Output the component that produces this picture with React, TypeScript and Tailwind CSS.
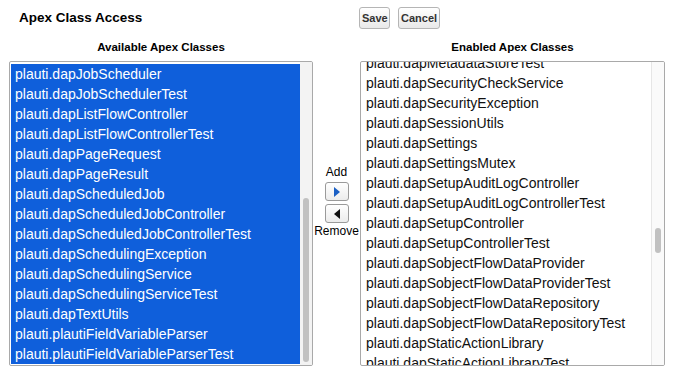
import React from 'react';

const available = [
  'plauti.dapJobScheduler',
  'plauti.dapJobSchedulerTest',
  'plauti.dapListFlowController',
  'plauti.dapListFlowControllerTest',
  'plauti.dapPageRequest',
  'plauti.dapPageResult',
  'plauti.dapScheduledJob',
  'plauti.dapScheduledJobController',
  'plauti.dapScheduledJobControllerTest',
  'plauti.dapSchedulingException',
  'plauti.dapSchedulingService',
  'plauti.dapSchedulingServiceTest',
  'plauti.dapTextUtils',
  'plauti.plautiFieldVariableParser',
  'plauti.plautiFieldVariableParserTest',
];

const enabled = [
  'plauti.dapMetadataStoreTest',
  'plauti.dapSecurityCheckService',
  'plauti.dapSecurityException',
  'plauti.dapSessionUtils',
  'plauti.dapSettings',
  'plauti.dapSettingsMutex',
  'plauti.dapSetupAuditLogController',
  'plauti.dapSetupAuditLogControllerTest',
  'plauti.dapSetupController',
  'plauti.dapSetupControllerTest',
  'plauti.dapSobjectFlowDataProvider',
  'plauti.dapSobjectFlowDataProviderTest',
  'plauti.dapSobjectFlowDataRepository',
  'plauti.dapSobjectFlowDataRepositoryTest',
  'plauti.dapStaticActionLibrary',
  'plauti.dapStaticActionLibraryTest',
];

const btn =
  'h-[22px] px-[2px] rounded-[3px] border border-[#b5b5b5] bg-gradient-to-b from-[#ffffff] to-[#e9e9e9] text-[11px] font-bold text-[#333]';

export default function App() {
  return (
    <div
      className="w-[678px] h-[379px] bg-white text-black overflow-hidden"
      style={{ fontFamily: '"Liberation Sans", Arial, sans-serif' }}
    >
      {/* en-tête */}
      <div className="flex items-center pt-[7px] pl-[19px]">
        <h1 className="w-[340px] text-[13.5px] font-bold">Apex Class Access</h1>
        <div className="flex gap-[8px]">
          <button className={`${btn} w-[31px]`}>Save</button>
          <button className={`${btn} w-[42px]`}>Cancel</button>
        </div>
      </div>

      <div className="grid grid-cols-[304px_47px_305px] pl-[9px] mt-[11px]">
        <div className="text-center text-[11.5px] font-bold leading-[14px]">Available Apex Classes</div>
        <div />
        <div className="text-center text-[11.5px] font-bold leading-[14px]">Enabled Apex Classes</div>

        {/* liste de gauche */}
        <div className="mt-[7px] h-[305px] border border-[#a9a9a9] rounded-[2px] flex overflow-hidden">
          <div className="flex-1 pt-[2px] pl-[1px] overflow-hidden">
            {available.map((c) => (
              <div key={c} className="h-[20px] leading-[20px] bg-[#0f5fdb] text-white text-[14px] pl-[4px] whitespace-nowrap">
                {c}
              </div>
            ))}
          </div>
          <div className="w-[12px] bg-[#f3f3f3] flex flex-col">
            <div className="h-[136px]" />
            <div className="mx-[3px] h-[164px] rounded-full bg-[#c1c1c1]" />
          </div>
        </div>

        {/* boutons centre */}
        <div className="flex flex-col items-center pt-[111px] text-[12px]">
          <div className="leading-[14px] mb-[3px]">Add</div>
          <button className="w-[24px] h-[19px] rounded-[3px] border border-[#9a9a9a] bg-gradient-to-b from-[#ffffff] to-[#ececec] flex items-center justify-center">
            <svg width="6" height="10" viewBox="0 0 6 10">
              <path d="M0 0 L6 5 L0 10 Z" fill="#1a5fc4" />
            </svg>
          </button>
          <button className="mt-[3px] w-[24px] h-[19px] rounded-[3px] border border-[#9a9a9a] bg-gradient-to-b from-[#ffffff] to-[#ececec] flex items-center justify-center">
            <svg width="6" height="10" viewBox="0 0 6 10">
              <path d="M6 0 L0 5 L6 10 Z" fill="#111" />
            </svg>
          </button>
          <div className="leading-[14px] mt-[1px]">Remove</div>
        </div>

        {/* liste de droite */}
        <div className="mt-[7px] h-[305px] border border-[#a9a9a9] rounded-[2px] flex overflow-hidden">
          <div className="flex-1 overflow-hidden">
            <div className="mt-[-9px]">
              {enabled.map((c) => (
                <div key={c} className="h-[20px] leading-[20px] text-[14px] text-[#111] pl-[5px] whitespace-nowrap">
                  {c}
                </div>
              ))}
            </div>
          </div>
          <div className="w-[13px] border-l border-[#e6e6e6] bg-[#fafafa] flex flex-col">
            <div className="h-[166px]" />
            <div className="mx-[3px] h-[25px] rounded-full bg-[#c1c1c1]" />
          </div>
        </div>
      </div>
    </div>
  );
}
